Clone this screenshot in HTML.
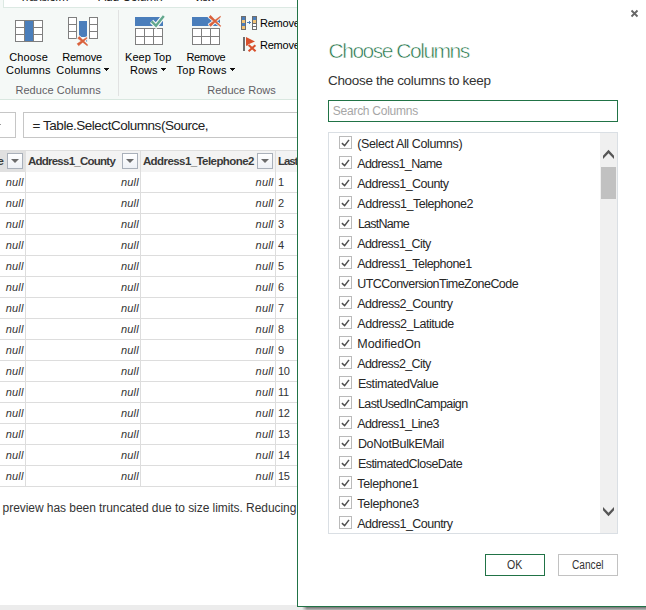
<!DOCTYPE html>
<html>
<head>
<meta charset="utf-8">
<title>Choose Columns</title>
<style>
html,body{margin:0;padding:0;}
body{width:646px;height:610px;overflow:hidden;background:#fff;position:relative;font-family:"Liberation Sans",sans-serif;color:#222;}
.abs{position:absolute;}
svg{position:absolute;overflow:visible;}
.t{position:absolute;white-space:nowrap;line-height:14px;height:14px;}
#ribbon{left:0;top:0;width:646px;height:99px;background:#f5f9f7;border-bottom:1px solid #d9e8e0;}
#tabs{left:3px;top:-1px;width:646px;height:7px;background:#fff;border:1px solid #dce9e3;}
.rl{font-size:11px;color:#000;}
.grp{font-size:11px;color:#625e65;}
.vsep{width:1px;background:#e1e2e2;}
.fbox{border:1px solid #c6c6c6;background:#fff;box-sizing:border-box;}
.hl{height:1px;background:#dddddd;left:0;width:297px;}
.vl{width:1px;background:#dddddd;top:150px;height:337px;}
.ht{font-size:11.5px;font-weight:bold;color:#3a3a3a;top:154px;}
.dd{width:14px;height:14px;border:1px solid #a9b0ba;background:linear-gradient(#fff,#eef1f6);top:153px;}
.dd i{position:absolute;left:3px;top:5px;width:0;height:0;border-left:4px solid transparent;border-right:4px solid transparent;border-top:4px solid #6b6b6b;}
.nul{font-size:11px;font-style:italic;color:#333;letter-spacing:0.2px;}
.num{font-size:11px;color:#333;letter-spacing:-0.3px;}
#dlg{left:297px;top:-5px;width:360px;height:610px;background:#fff;border:1px solid #217346;}
#shadow{left:302px;top:607px;width:345px;height:3px;background:linear-gradient(to right,#ececec 0,rgba(236,236,236,0) 5px),linear-gradient(#737373,#bababa);}
.it{font-size:12.5px;color:#262626;left:357px;}
.cb{left:339px;width:11px;height:11px;border:1px solid #bababa;background:#fff;}
.btn{box-sizing:border-box;height:22px;width:60px;top:554px;background:#fff;}
.ar{width:0;height:0;border-left:2.5px solid transparent;border-right:2.5px solid transparent;border-top:3px solid #222;}
</style>
</head>
<body>
<div id="ribbon" class="abs"></div>
<div id="tabs" class="abs"></div>
<div class="t " style="left:19.6px;top:-10px;letter-spacing:-0.654px;font-size:12px;color:#222;">Transform</div>
<div class="t " style="left:98.3px;top:-10px;letter-spacing:-0.182px;font-size:12px;color:#222;">Add Column</div>
<div class="t " style="left:193.6px;top:-10px;letter-spacing:-1.331px;font-size:12px;color:#222;">View</div>
<div class="t rl" style="left:9.3px;top:50px;letter-spacing:0.117px;">Choose</div>
<div class="t rl" style="left:6.1px;top:63px;letter-spacing:0.183px;">Columns</div>
<div class="t rl" style="left:62.2px;top:50px;letter-spacing:-0.192px;">Remove</div>
<div class="t rl" style="left:56.3px;top:63px;letter-spacing:0.166px;">Columns</div>
<div class="t rl" style="left:125.1px;top:50px;letter-spacing:-0.012px;">Keep Top</div>
<div class="t rl" style="left:130.1px;top:63px;letter-spacing:-0.069px;">Rows</div>
<div class="t rl" style="left:186.4px;top:50px;letter-spacing:-0.332px;">Remove</div>
<div class="t rl" style="left:176.6px;top:63px;letter-spacing:0.229px;">Top Rows</div>
<div class="t rl" style="left:259.9px;top:16px;letter-spacing:-0.192px;">Remove</div>
<div class="t rl" style="left:259.9px;top:38px;letter-spacing:-0.192px;">Remove</div>
<div class="t grp" style="left:15.4px;top:83px;letter-spacing:0.071px;">Reduce Columns</div>
<div class="t grp" style="left:207.3px;top:83px;letter-spacing:0.002px;">Reduce Rows</div>
<svg style="left:104px;top:68px;" width="5" height="3" viewBox="0 0 5 3" shape-rendering="crispEdges"><rect x="0" y="0" width="5" height="1" fill="#111"/><rect x="1" y="1" width="3" height="1" fill="#111"/><rect x="2" y="2" width="1" height="1" fill="#111"/></svg>
<svg style="left:161px;top:68px;" width="5" height="3" viewBox="0 0 5 3" shape-rendering="crispEdges"><rect x="0" y="0" width="5" height="1" fill="#111"/><rect x="1" y="1" width="3" height="1" fill="#111"/><rect x="2" y="2" width="1" height="1" fill="#111"/></svg>
<svg style="left:230px;top:68px;" width="5" height="3" viewBox="0 0 5 3" shape-rendering="crispEdges"><rect x="0" y="0" width="5" height="1" fill="#111"/><rect x="1" y="1" width="3" height="1" fill="#111"/><rect x="2" y="2" width="1" height="1" fill="#111"/></svg>
<div class="abs vsep" style="left:118px;top:10px;height:86px;"></div>
<svg style="left:15px;top:20px;" width="28" height="22" viewBox="0 0 28 22" shape-rendering="crispEdges"><rect x="0" y="0" width="28" height="22" fill="#7f7f7f"/><rect x="1" y="1" width="8" height="6" fill="#fff"/><rect x="1" y="8" width="8" height="6" fill="#fff"/><rect x="1" y="15" width="8" height="6" fill="#fff"/><rect x="19" y="1" width="8" height="6" fill="#fff"/><rect x="19" y="8" width="8" height="6" fill="#fff"/><rect x="19" y="15" width="8" height="6" fill="#fff"/><rect x="10" y="1" width="8" height="20" fill="#4a7ebb"/></svg>
<svg style="left:60px;top:8px;" width="48" height="42" viewBox="60 8 48 42"><g shape-rendering="crispEdges"><rect x="68" y="17" width="9" height="22" fill="#7f7f7f"/><rect x="69" y="18" width="7" height="6" fill="#fff"/><rect x="69" y="25" width="7" height="6" fill="#fff"/><rect x="69" y="32" width="7" height="6" fill="#fff"/><rect x="89" y="17" width="9" height="22" fill="#7f7f7f"/><rect x="90" y="18" width="7" height="6" fill="#fff"/><rect x="90" y="25" width="7" height="6" fill="#fff"/><rect x="90" y="32" width="7" height="6" fill="#fff"/><rect x="79" y="21" width="8" height="16" fill="#4a7ebb"/></g><path d="M77.70 38.30 L79.30 36.50 L87.80 45.06 L87.20 45.74 Z M78.70 45.83 L77.10 43.77 L86.59 37.41 L87.21 38.19 Z" fill="#f5f9f7" stroke="#f5f9f7" stroke-width="2.2" stroke-linejoin="round"/><path d="M77.70 38.30 L79.30 36.50 L87.80 45.06 L87.20 45.74 Z M78.70 45.83 L77.10 43.77 L86.59 37.41 L87.21 38.19 Z" fill="#d9603b" stroke="#d9603b" stroke-width="0.5" stroke-linejoin="round"/><rect x="86.1" y="40.2" width="1" height="1.4" fill="#4a7ebb" opacity="0.85"/></svg>
<svg style="left:124px;top:8px;" width="48" height="42" viewBox="124 8 48 42"><g shape-rendering="crispEdges"><rect x="135" y="17" width="28" height="9" fill="#4a7ebb"/><rect x="135" y="28" width="28" height="17" fill="#7f7f7f"/><rect x="136" y="29" width="8" height="7" fill="#fff"/><rect x="145" y="29" width="8" height="7" fill="#fff"/><rect x="154" y="29" width="8" height="7" fill="#fff"/><rect x="136" y="37" width="8" height="7" fill="#fff"/><rect x="145" y="37" width="8" height="7" fill="#fff"/><rect x="154" y="37" width="8" height="7" fill="#fff"/></g><path d="M151.6 21.3 L156 25.8 L163.8 16" stroke="#f5f9f7" stroke-width="4.6" fill="none"/><path d="M151.6 21.3 L156 25.8 L163.8 16" stroke="#62a88e" stroke-width="2.4" fill="none"/></svg>
<svg style="left:180px;top:8px;" width="48" height="42" viewBox="180 8 48 42"><g shape-rendering="crispEdges"><rect x="192" y="17" width="28" height="9" fill="#4a7ebb"/><rect x="192" y="28" width="28" height="17" fill="#7f7f7f"/><rect x="193" y="29" width="8" height="7" fill="#fff"/><rect x="202" y="29" width="8" height="7" fill="#fff"/><rect x="211" y="29" width="8" height="7" fill="#fff"/><rect x="193" y="37" width="8" height="7" fill="#fff"/><rect x="202" y="37" width="8" height="7" fill="#fff"/><rect x="211" y="37" width="8" height="7" fill="#fff"/></g><path d="M212.5 17 L219 17 L215.6 20 Z" fill="#eef2f3"/><path d="M208.86 17.23 L210.54 15.37 L220.87 25.90 L220.33 26.50 Z M210.63 26.40 L208.97 24.40 L220.28 16.33 L220.72 16.87 Z" fill="#f5f9f7" stroke="#f5f9f7" stroke-width="2.2" stroke-linejoin="round"/><path d="M208.86 17.23 L210.54 15.37 L220.87 25.90 L220.33 26.50 Z M210.63 26.40 L208.97 24.40 L220.28 16.33 L220.72 16.87 Z" fill="#d9603b" stroke="#d9603b" stroke-width="0.5" stroke-linejoin="round"/></svg>
<svg style="left:236px;top:8px;" width="28" height="48" viewBox="236 8 28 48"><g shape-rendering="crispEdges"><rect x="241" y="16" width="5" height="14" fill="#6e6e6e"/><rect x="242" y="17" width="3" height="3" fill="#4a7ebb"/><rect x="242" y="20" width="3" height="3" fill="#f3c373"/><rect x="242" y="23" width="3" height="3" fill="#4a7ebb"/><rect x="242" y="26" width="3" height="3" fill="#f3c373"/><rect x="252" y="16" width="5" height="14" fill="#6e6e6e"/><rect x="253" y="17" width="3" height="3" fill="#4a7ebb"/><rect x="253" y="20" width="3" height="3" fill="#f3c373"/><rect x="253" y="24" width="3" height="2" fill="#fff"/><rect x="253" y="27" width="3" height="2" fill="#fff"/><rect x="247" y="22" width="4" height="1" fill="#4a7ebb"/><rect x="249" y="21" width="1" height="3" fill="#4a7ebb"/><rect x="243" y="37" width="2" height="14" fill="#6e6e6e"/></g><path d="M246 36.9 L255 41.5 L248.6 44.2 L247.3 45.7 L246 45.7 Z" fill="#d8512d"/><path d="M248.6 45 L255.6 51.2 M255.4 45.2 L248.6 51.2" stroke="#d8512d" stroke-width="2.1" fill="none"/></svg>
<div class="abs fbox" style="left:-5px;top:112px;width:21px;height:26px;"></div>
<div class="abs fbox" style="left:23px;top:112px;width:300px;height:26px;"></div>
<div class="abs" style="left:0;top:124px;width:1px;height:1px;background:#9a9a9a;"></div>
<div class="t " style="left:32.6px;top:119px;letter-spacing:-0.472px;font-size:13.5px;color:#222;">= Table.SelectColumns(Source,</div>
<div class="abs" style="left:0;top:150px;width:297px;height:1px;background:#dedede;"></div>
<div class="abs" style="left:0;top:151px;width:26px;height:21px;background:#e0e0e0;"></div>
<div class="abs" style="left:26px;top:151px;width:272px;height:21px;background:#f3f3f3;"></div>
<div class="abs hl" style="top:192px;"></div>
<div class="abs hl" style="top:213px;"></div>
<div class="abs hl" style="top:234px;"></div>
<div class="abs hl" style="top:255px;"></div>
<div class="abs hl" style="top:276px;"></div>
<div class="abs hl" style="top:297px;"></div>
<div class="abs hl" style="top:318px;"></div>
<div class="abs hl" style="top:339px;"></div>
<div class="abs hl" style="top:360px;"></div>
<div class="abs hl" style="top:381px;"></div>
<div class="abs hl" style="top:402px;"></div>
<div class="abs hl" style="top:423px;"></div>
<div class="abs hl" style="top:444px;"></div>
<div class="abs hl" style="top:465px;"></div>
<div class="abs hl" style="top:486px;"></div>
<div class="abs vl" style="left:25px;top:172px;height:315px;"></div>
<div class="abs vl" style="left:140px;"></div>
<div class="abs vl" style="left:275px;"></div>
<div class="t ht" style="left:-2.4px;">e</div>
<div class="t ht" style="left:27.9px;top:154px;letter-spacing:-0.751px;">Address1_County</div>
<div class="t ht" style="left:142.9px;top:154px;letter-spacing:-0.575px;">Address1_Telephone2</div>
<div class="t ht" style="left:278px;letter-spacing:-1.1px;">LastName</div>
<div class="abs dd" style="left:7px;"><i></i></div>
<div class="abs dd" style="left:122px;"><i></i></div>
<div class="abs dd" style="left:257px;"><i></i></div>
<div class="t nul" style="right:622.4px;top:175px;">null</div>
<div class="t nul" style="right:507.2px;top:175px;">null</div>
<div class="t nul" style="right:372.5px;top:175px;">null</div>
<div class="t num" style="left:278px;top:175px;">1</div>
<div class="t nul" style="right:622.4px;top:196px;">null</div>
<div class="t nul" style="right:507.2px;top:196px;">null</div>
<div class="t nul" style="right:372.5px;top:196px;">null</div>
<div class="t num" style="left:278px;top:196px;">2</div>
<div class="t nul" style="right:622.4px;top:217px;">null</div>
<div class="t nul" style="right:507.2px;top:217px;">null</div>
<div class="t nul" style="right:372.5px;top:217px;">null</div>
<div class="t num" style="left:278px;top:217px;">3</div>
<div class="t nul" style="right:622.4px;top:238px;">null</div>
<div class="t nul" style="right:507.2px;top:238px;">null</div>
<div class="t nul" style="right:372.5px;top:238px;">null</div>
<div class="t num" style="left:278px;top:238px;">4</div>
<div class="t nul" style="right:622.4px;top:259px;">null</div>
<div class="t nul" style="right:507.2px;top:259px;">null</div>
<div class="t nul" style="right:372.5px;top:259px;">null</div>
<div class="t num" style="left:278px;top:259px;">5</div>
<div class="t nul" style="right:622.4px;top:280px;">null</div>
<div class="t nul" style="right:507.2px;top:280px;">null</div>
<div class="t nul" style="right:372.5px;top:280px;">null</div>
<div class="t num" style="left:278px;top:280px;">6</div>
<div class="t nul" style="right:622.4px;top:301px;">null</div>
<div class="t nul" style="right:507.2px;top:301px;">null</div>
<div class="t nul" style="right:372.5px;top:301px;">null</div>
<div class="t num" style="left:278px;top:301px;">7</div>
<div class="t nul" style="right:622.4px;top:322px;">null</div>
<div class="t nul" style="right:507.2px;top:322px;">null</div>
<div class="t nul" style="right:372.5px;top:322px;">null</div>
<div class="t num" style="left:278px;top:322px;">8</div>
<div class="t nul" style="right:622.4px;top:343px;">null</div>
<div class="t nul" style="right:507.2px;top:343px;">null</div>
<div class="t nul" style="right:372.5px;top:343px;">null</div>
<div class="t num" style="left:278px;top:343px;">9</div>
<div class="t nul" style="right:622.4px;top:364px;">null</div>
<div class="t nul" style="right:507.2px;top:364px;">null</div>
<div class="t nul" style="right:372.5px;top:364px;">null</div>
<div class="t num" style="left:278px;top:364px;">10</div>
<div class="t nul" style="right:622.4px;top:385px;">null</div>
<div class="t nul" style="right:507.2px;top:385px;">null</div>
<div class="t nul" style="right:372.5px;top:385px;">null</div>
<div class="t num" style="left:278px;top:385px;">11</div>
<div class="t nul" style="right:622.4px;top:406px;">null</div>
<div class="t nul" style="right:507.2px;top:406px;">null</div>
<div class="t nul" style="right:372.5px;top:406px;">null</div>
<div class="t num" style="left:278px;top:406px;">12</div>
<div class="t nul" style="right:622.4px;top:427px;">null</div>
<div class="t nul" style="right:507.2px;top:427px;">null</div>
<div class="t nul" style="right:372.5px;top:427px;">null</div>
<div class="t num" style="left:278px;top:427px;">13</div>
<div class="t nul" style="right:622.4px;top:448px;">null</div>
<div class="t nul" style="right:507.2px;top:448px;">null</div>
<div class="t nul" style="right:372.5px;top:448px;">null</div>
<div class="t num" style="left:278px;top:448px;">14</div>
<div class="t nul" style="right:622.4px;top:469px;">null</div>
<div class="t nul" style="right:507.2px;top:469px;">null</div>
<div class="t nul" style="right:372.5px;top:469px;">null</div>
<div class="t num" style="left:278px;top:469px;">15</div>
<div class="t " style="left:2.6px;top:501px;letter-spacing:-0.056px;font-size:12px;color:#333;">preview has been truncated due to size limits. Reducing</div>
<div class="abs" style="left:0;top:605px;width:646px;height:5px;background:#ececec;"></div>
<div id="shadow" class="abs"></div>
<div id="dlg" class="abs"></div>
<svg style="left:630px;top:9px;" width="9" height="9" viewBox="0 0 9 9"><path d="M1.5 1.5 L7.5 7.5 M7.5 1.5 L1.5 7.5" stroke="#666" stroke-width="1.8" fill="none"/></svg>
<div class="t " style="left:328.5px;top:39px;letter-spacing:-1.483px;font-size:21px;line-height:24px;height:24px;color:#217346;-webkit-text-stroke:0.55px #fff;">Choose Columns</div>
<div class="t " style="left:328.0px;top:74px;letter-spacing:-0.328px;font-size:13.5px;color:#333;">Choose the columns to keep</div>
<div class="abs" style="left:328px;top:100px;width:288px;height:20px;border:1px solid #217346;background:#fff;"></div>
<div class="t " style="left:332.8px;top:104px;letter-spacing:-0.254px;font-size:12px;color:#a6a6a6;">Search Columns</div>
<div class="abs" style="left:328px;top:132px;width:288px;height:400px;border:1px solid #dadfe4;background:#fff;"></div>
<div class="abs" style="left:600px;top:133px;width:17px;height:400px;background:#f0f0f0;"></div>
<div class="abs" style="left:601px;top:167px;width:15px;height:32px;background:#c1c1c1;"></div>
<svg style="left:600px;top:145px;" width="17" height="17" viewBox="600 145 17 17"><path d="M603 155.8 L608.5 149.8 L614 155.8 L614 159 L608.5 153.3 L603 159 Z" fill="#565656"/></svg>
<svg style="left:600px;top:503px;" width="17" height="17" viewBox="600 503 17 17"><path d="M603 507 L608.5 512.7 L614 507 L614 510.2 L608.5 516.2 L603 510.2 Z" fill="#565656"/></svg>
<div class="abs cb" style="top:136px;"><svg style="left:0;top:0;" width="11" height="11" viewBox="0 0 11 11"><path d="M1.9 6.1 L4.6 8.6 L9 2.9" stroke="#505050" stroke-width="1.5" fill="none"/></svg></div>
<div class="t it" style="left:357.3px;top:137px;letter-spacing:-0.381px;">(Select All Columns)</div>
<div class="abs cb" style="top:156px;"><svg style="left:0;top:0;" width="11" height="11" viewBox="0 0 11 11"><path d="M1.9 6.1 L4.6 8.6 L9 2.9" stroke="#505050" stroke-width="1.5" fill="none"/></svg></div>
<div class="t it" style="left:357.3px;top:157px;letter-spacing:-0.659px;">Address1_Name</div>
<div class="abs cb" style="top:176px;"><svg style="left:0;top:0;" width="11" height="11" viewBox="0 0 11 11"><path d="M1.9 6.1 L4.6 8.6 L9 2.9" stroke="#505050" stroke-width="1.5" fill="none"/></svg></div>
<div class="t it" style="left:357.3px;top:177px;letter-spacing:-0.548px;">Address1_County</div>
<div class="abs cb" style="top:196px;"><svg style="left:0;top:0;" width="11" height="11" viewBox="0 0 11 11"><path d="M1.9 6.1 L4.6 8.6 L9 2.9" stroke="#505050" stroke-width="1.5" fill="none"/></svg></div>
<div class="t it" style="left:357.3px;top:197px;letter-spacing:-0.461px;">Address1_Telephone2</div>
<div class="abs cb" style="top:216px;"><svg style="left:0;top:0;" width="11" height="11" viewBox="0 0 11 11"><path d="M1.9 6.1 L4.6 8.6 L9 2.9" stroke="#505050" stroke-width="1.5" fill="none"/></svg></div>
<div class="t it" style="left:357.9px;top:217px;letter-spacing:-0.739px;">LastName</div>
<div class="abs cb" style="top:236px;"><svg style="left:0;top:0;" width="11" height="11" viewBox="0 0 11 11"><path d="M1.9 6.1 L4.6 8.6 L9 2.9" stroke="#505050" stroke-width="1.5" fill="none"/></svg></div>
<div class="t it" style="left:357.3px;top:237px;letter-spacing:-0.607px;">Address1_City</div>
<div class="abs cb" style="top:256px;"><svg style="left:0;top:0;" width="11" height="11" viewBox="0 0 11 11"><path d="M1.9 6.1 L4.6 8.6 L9 2.9" stroke="#505050" stroke-width="1.5" fill="none"/></svg></div>
<div class="t it" style="left:357.3px;top:257px;letter-spacing:-0.528px;">Address1_Telephone1</div>
<div class="abs cb" style="top:276px;"><svg style="left:0;top:0;" width="11" height="11" viewBox="0 0 11 11"><path d="M1.9 6.1 L4.6 8.6 L9 2.9" stroke="#505050" stroke-width="1.5" fill="none"/></svg></div>
<div class="t it" style="left:357.3px;top:277px;letter-spacing:-0.554px;">UTCConversionTimeZoneCode</div>
<div class="abs cb" style="top:296px;"><svg style="left:0;top:0;" width="11" height="11" viewBox="0 0 11 11"><path d="M1.9 6.1 L4.6 8.6 L9 2.9" stroke="#505050" stroke-width="1.5" fill="none"/></svg></div>
<div class="t it" style="left:357.3px;top:297px;letter-spacing:-0.522px;">Address2_Country</div>
<div class="abs cb" style="top:316px;"><svg style="left:0;top:0;" width="11" height="11" viewBox="0 0 11 11"><path d="M1.9 6.1 L4.6 8.6 L9 2.9" stroke="#505050" stroke-width="1.5" fill="none"/></svg></div>
<div class="t it" style="left:357.3px;top:317px;letter-spacing:-0.459px;">Address2_Latitude</div>
<div class="abs cb" style="top:336px;"><svg style="left:0;top:0;" width="11" height="11" viewBox="0 0 11 11"><path d="M1.9 6.1 L4.6 8.6 L9 2.9" stroke="#505050" stroke-width="1.5" fill="none"/></svg></div>
<div class="t it" style="left:357.3px;top:337px;letter-spacing:-0.047px;">ModifiedOn</div>
<div class="abs cb" style="top:356px;"><svg style="left:0;top:0;" width="11" height="11" viewBox="0 0 11 11"><path d="M1.9 6.1 L4.6 8.6 L9 2.9" stroke="#505050" stroke-width="1.5" fill="none"/></svg></div>
<div class="t it" style="left:357.3px;top:357px;letter-spacing:-0.607px;">Address2_City</div>
<div class="abs cb" style="top:376px;"><svg style="left:0;top:0;" width="11" height="11" viewBox="0 0 11 11"><path d="M1.9 6.1 L4.6 8.6 L9 2.9" stroke="#505050" stroke-width="1.5" fill="none"/></svg></div>
<div class="t it" style="left:357.9px;top:377px;letter-spacing:-0.44px;">EstimatedValue</div>
<div class="abs cb" style="top:396px;"><svg style="left:0;top:0;" width="11" height="11" viewBox="0 0 11 11"><path d="M1.9 6.1 L4.6 8.6 L9 2.9" stroke="#505050" stroke-width="1.5" fill="none"/></svg></div>
<div class="t it" style="left:357.9px;top:397px;letter-spacing:-0.583px;">LastUsedInCampaign</div>
<div class="abs cb" style="top:416px;"><svg style="left:0;top:0;" width="11" height="11" viewBox="0 0 11 11"><path d="M1.9 6.1 L4.6 8.6 L9 2.9" stroke="#505050" stroke-width="1.5" fill="none"/></svg></div>
<div class="t it" style="left:357.3px;top:417px;letter-spacing:-0.634px;">Address1_Line3</div>
<div class="abs cb" style="top:436px;"><svg style="left:0;top:0;" width="11" height="11" viewBox="0 0 11 11"><path d="M1.9 6.1 L4.6 8.6 L9 2.9" stroke="#505050" stroke-width="1.5" fill="none"/></svg></div>
<div class="t it" style="left:357.9px;top:437px;letter-spacing:-0.354px;">DoNotBulkEMail</div>
<div class="abs cb" style="top:456px;"><svg style="left:0;top:0;" width="11" height="11" viewBox="0 0 11 11"><path d="M1.9 6.1 L4.6 8.6 L9 2.9" stroke="#505050" stroke-width="1.5" fill="none"/></svg></div>
<div class="t it" style="left:357.9px;top:457px;letter-spacing:-0.544px;">EstimatedCloseDate</div>
<div class="abs cb" style="top:476px;"><svg style="left:0;top:0;" width="11" height="11" viewBox="0 0 11 11"><path d="M1.9 6.1 L4.6 8.6 L9 2.9" stroke="#505050" stroke-width="1.5" fill="none"/></svg></div>
<div class="t it" style="left:357.3px;top:477px;letter-spacing:-0.371px;">Telephone1</div>
<div class="abs cb" style="top:496px;"><svg style="left:0;top:0;" width="11" height="11" viewBox="0 0 11 11"><path d="M1.9 6.1 L4.6 8.6 L9 2.9" stroke="#505050" stroke-width="1.5" fill="none"/></svg></div>
<div class="t it" style="left:357.3px;top:497px;letter-spacing:-0.294px;">Telephone3</div>
<div class="abs cb" style="top:516px;"><svg style="left:0;top:0;" width="11" height="11" viewBox="0 0 11 11"><path d="M1.9 6.1 L4.6 8.6 L9 2.9" stroke="#505050" stroke-width="1.5" fill="none"/></svg></div>
<div class="t it" style="left:357.3px;top:517px;letter-spacing:-0.522px;">Address1_Country</div>
<div class="abs btn" style="left:485px;border:1px solid #217346;"></div>
<div class="abs btn" style="left:558px;border:1px solid #c2c2c2;"></div>
<div class="t" style="left:507.3px;top:558px;font-size:12px;transform-origin:0 0;transform:scaleX(0.882);color:#333;">OK</div>
<div class="t" style="left:572.4px;top:558px;font-size:12px;transform-origin:0 0;transform:scaleX(0.846);color:#333;">Cancel</div>
</body>
</html>
